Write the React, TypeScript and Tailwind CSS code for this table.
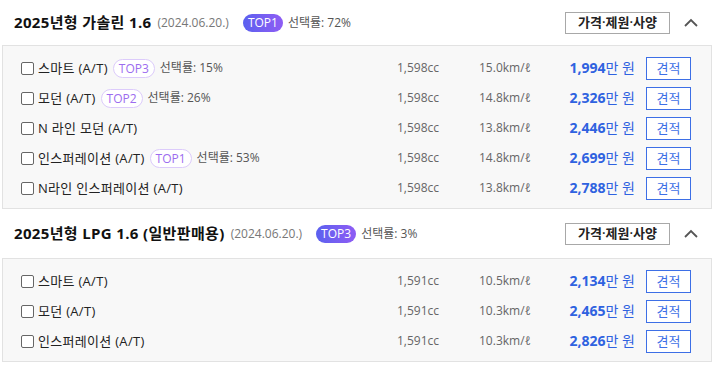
import React from "react";

type Row = { name: string; top?: string; rate?: string; cc: string; eff: string; price: string };

const sec1: Row[] = [
  { name: "스마트 (A/T)", top: "TOP3", rate: "선택률: 15%", cc: "1,598cc", eff: "15.0km/ℓ", price: "1,994" },
  { name: "모던 (A/T)", top: "TOP2", rate: "선택률: 26%", cc: "1,598cc", eff: "14.8km/ℓ", price: "2,326" },
  { name: "N 라인 모던 (A/T)", cc: "1,598cc", eff: "13.8km/ℓ", price: "2,446" },
  { name: "인스퍼레이션 (A/T)", top: "TOP1", rate: "선택률: 53%", cc: "1,598cc", eff: "14.8km/ℓ", price: "2,699" },
  { name: "N라인 인스퍼레이션 (A/T)", cc: "1,598cc", eff: "13.8km/ℓ", price: "2,788" },
];

const sec2: Row[] = [
  { name: "스마트 (A/T)", cc: "1,591cc", eff: "10.5km/ℓ", price: "2,134" },
  { name: "모던 (A/T)", cc: "1,591cc", eff: "10.3km/ℓ", price: "2,465" },
  { name: "인스퍼레이션 (A/T)", cc: "1,591cc", eff: "10.3km/ℓ", price: "2,826" },
];

function Header({ title, top, rate, h }: { title: string; top: string; rate: string; h: string }) {
  return (
    <div className={`flex items-center ${h} pl-[14px] pr-[21px]`}>
      <span className="text-[15px] tracking-[0.35px] font-bold text-[#111] leading-none">{title}</span>
      <span className="ml-[6px] text-[12px] text-[#777] leading-none">(2024.06.20.)</span>
      <span className="ml-[14px] h-[18px] px-[5px] rounded-full bg-gradient-to-r from-[#5a60ef] to-[#8e5cf4] text-white text-[12px] leading-[18px]">
        {top}
      </span>
      <span className="ml-[5px] text-[12px] text-[#555] leading-none">{rate}</span>
      <div className="flex-1" />
      <button className="h-[22px] w-[105px] border border-[#a8a8a8] bg-white text-[13px] font-semibold text-[#222] leading-none">
        가격·제원·사양
      </button>
      <svg className="ml-[12px]" width="18" height="12" viewBox="0 0 18 12">
        <path d="M3 9 L9 3 L15 9" fill="none" stroke="#555" strokeWidth="1.8" />
      </svg>
    </div>
  );
}

function Panel({ rows }: { rows: Row[] }) {
  return (
    <div className="ml-[2px] w-[710px] border border-[#e2e2e2] bg-[#f8f8f8] pt-[7px] pb-[5px]">
      {rows.map((r, i) => (
        <div key={i} className="flex items-center h-[30px] pl-[18px] pr-[20px]">
          <span className="w-[13px] h-[13px] border border-[#666] rounded-[2px] bg-white shrink-0" />
          <span className="ml-[4px] text-[13px] tracking-[0.3px] text-[#222] leading-none">{r.name}</span>
          {r.top && (
            <span className="ml-[5px] h-[19px] px-[5px] rounded-full border border-[#dccbfb] bg-white text-[12px] text-[#9c6cef] leading-[17px]">
              {r.top}
            </span>
          )}
          {r.rate && <span className="ml-[5px] text-[12px] text-[#555] leading-none">{r.rate}</span>}
          <div className="flex-1" />
          <span className="w-[82px] text-[12px] text-[#666] leading-none">{r.cc}</span>
          <span className="w-[70px] text-[12px] text-[#666] leading-none">{r.eff}</span>
          <span className="w-[86px] text-right text-[14px] text-[#2f62e0] leading-none">
            <span className="font-bold">{r.price}</span>만 원
          </span>
          <button className="ml-[11px] w-[45px] h-[23px] border border-[#3d6fe6] bg-white text-[13px] text-[#3d6fe6] leading-none">
            견적
          </button>
        </div>
      ))}
    </div>
  );
}

export default function App() {
  return (
    <div
      className="w-[721px] h-[365px] bg-white overflow-hidden"
      style={{ fontFamily: '"Open Sans", "Noto Sans CJK KR", sans-serif' }}
    >
      <Header title="2025년형 가솔린 1.6" top="TOP1" rate="선택률: 72%" h="h-[45px]" />
      <Panel rows={sec1} />
      <Header title="2025년형 LPG 1.6 (일반판매용)" top="TOP3" rate="선택률: 3%" h="h-[49px]" />
      <Panel rows={sec2} />
    </div>
  );
}
